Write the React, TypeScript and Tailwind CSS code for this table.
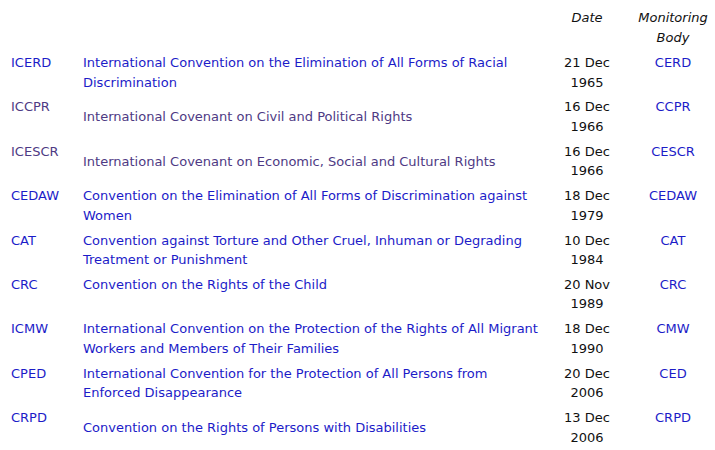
type Treaty = {
  abbr: string;
  title: string[];
  date: string[];
  body: string;
  visited?: boolean;
  top?: boolean;
};

const treaties: Treaty[] = [
  {
    abbr: "ICERD",
    title: ["International Convention on the Elimination of All Forms of Racial", "Discrimination"],
    date: ["21 Dec", "1965"],
    body: "CERD",
  },
  {
    abbr: "ICCPR",
    title: ["International Covenant on Civil and Political Rights"],
    date: ["16 Dec", "1966"],
    body: "CCPR",
    visited: true,
  },
  {
    abbr: "ICESCR",
    title: ["International Covenant on Economic, Social and Cultural Rights"],
    date: ["16 Dec", "1966"],
    body: "CESCR",
    visited: true,
  },
  {
    abbr: "CEDAW",
    title: ["Convention on the Elimination of All Forms of Discrimination against", "Women"],
    date: ["18 Dec", "1979"],
    body: "CEDAW",
  },
  {
    abbr: "CAT",
    title: ["Convention against Torture and Other Cruel, Inhuman or Degrading", "Treatment or Punishment"],
    date: ["10 Dec", "1984"],
    body: "CAT",
  },
  {
    abbr: "CRC",
    title: ["Convention on the Rights of the Child"],
    date: ["20 Nov", "1989"],
    body: "CRC",
    top: true,
  },
  {
    abbr: "ICMW",
    title: ["International Convention on the Protection of the Rights of All Migrant", "Workers and Members of Their Families"],
    date: ["18 Dec", "1990"],
    body: "CMW",
  },
  {
    abbr: "CPED",
    title: ["International Convention for the Protection of All Persons from", "Enforced Disappearance"],
    date: ["20 Dec", "2006"],
    body: "CED",
  },
  {
    abbr: "CRPD",
    title: ["Convention on the Rights of Persons with Disabilities"],
    date: ["13 Dec", "2006"],
    body: "CRPD",
  },
];

function Lines({ lines }: { lines: string[] }) {
  return (
    <>
      {lines.map((l, i) => (
        <div key={i} className="whitespace-nowrap">
          {l}
        </div>
      ))}
    </>
  );
}

export default function App() {
  return (
    <div
      className="w-[715px] h-[450px] overflow-hidden bg-white pt-[5px] pl-[11px] text-[13px] leading-[19.5px] text-[#111]"
      style={{ fontFamily: '"DejaVu Sans", Verdana, sans-serif' }}
    >
      <div className="grid grid-cols-[72px_465px_78px_7px_80px]">
        <div className="py-[3px]" />
        <div className="py-[3px]" />
        <div className="py-[3px] text-center italic">Date</div>
        <div />
        <div className="py-[3px] text-center italic">
          Monitoring
          <br />
          Body
        </div>

        {treaties.map((t) => {
          const color = t.visited ? "text-[#4e3a84]" : "text-[#1c1cc8]";
          return (
            <div key={t.abbr} className="contents">
              <div className={`pt-[3px] pb-[2.375px] ${color}`}>{t.abbr}</div>
              <div className={t.top ? `pt-[3px] ${color}` : `self-center pt-[1px] ${color}`}>
                <Lines lines={t.title} />
              </div>
              <div className="pt-[3px] pb-[2.375px] text-center">
                <Lines lines={t.date} />
              </div>
              <div />
              <div className="pt-[3px] pb-[2.375px] text-center text-[#1c1cc8]">{t.body}</div>
            </div>
          );
        })}
      </div>
    </div>
  );
}
